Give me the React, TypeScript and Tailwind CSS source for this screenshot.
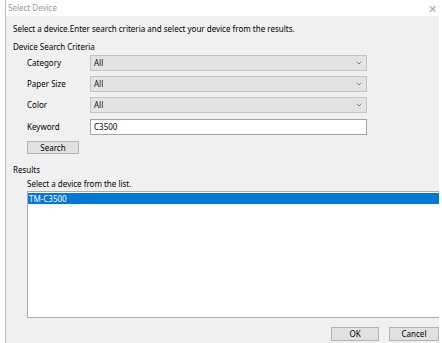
import { ChevronDown } from "lucide-react";

const rows = [
  { label: "Category", value: "All" },
  { label: "Paper Size", value: "All" },
  { label: "Color", value: "All" },
];

function SelectBox({ value }: { value: string }) {
  return (
    <div className="flex h-[16px] w-[277px] items-center justify-between border border-[#c4c4c4] bg-[#e3e3e3] pl-[3px] pr-[3px]">
      <span className="text-[#111]">{value}</span>
      <ChevronDown className="h-[8px] w-[8px] text-[#707070]" strokeWidth={2.5} />
    </div>
  );
}

export default function App() {
  return (
    <div className="relative h-[343px] w-[442px] overflow-hidden bg-white text-[8px] text-black [font-family:'Noto_Sans',Arial,sans-serif]">
      <div className="ml-[5px] flex h-full w-[434px] flex-col overflow-hidden border-l border-[#b5bcc6]">
        {/* title bar */}
        <div className="flex h-[16px] shrink-0 items-center justify-between bg-white pl-[2px] pr-[2px]">
          <span className="text-[#9a9a9a]">Select Device</span>
          <span className="text-[11px] font-extralight leading-none text-[#a8a8a8]">✕</span>
        </div>

        <div className="flex flex-1 flex-col bg-[#f0f0f0] pt-[6px]">
          <div className="h-[14px] pl-[7px] leading-[14px]">
            Select a device.Enter search criteria and select your device from the results.
          </div>
          <div className="mt-[4px] h-[14px] pl-[7px] leading-[14px]">Device Search Criteria</div>

          <div className="mt-[1px] flex flex-col gap-[5px] pl-[21px]">
            {rows.map((r) => (
              <div key={r.label} className="flex h-[16px] items-center">
                <span className="w-[63px]">{r.label}</span>
                <SelectBox value={r.value} />
              </div>
            ))}
            <div className="mt-[1px] flex h-[16px] items-center">
              <span className="w-[63px]">Keyword</span>
              <div className="flex h-[16px] w-[277px] items-center border border-[#a3a3a3] bg-white pl-[3px]">C3500</div>
            </div>
            <button className="mt-[1px] flex h-[13px] w-[52px] items-center justify-center border border-[#b4b4b4] bg-[#e1e1e1]">
              Search
            </button>
          </div>

          <div className="mt-[9px] h-[14px] pl-[7px] leading-[14px]">Results</div>
          <div className="h-[14px] pl-[21px] leading-[14px]">Select a device from the list.</div>

          <div className="ml-[21px] h-[127px] w-[420px] border border-[#acacac] bg-white pt-[1px]">
            <div className="flex h-[11px] items-center bg-[#0078d7] pl-[1px] text-white">TM-C3500</div>
          </div>

          <div className="mt-[9px] flex justify-end gap-[10px]">
            <button className="flex h-[14px] w-[48px] items-center justify-center border border-[#b4b4b4] bg-[#e1e1e1]">
              OK
            </button>
            <button className="flex h-[14px] w-[50px] items-center justify-center border border-[#b4b4b4] bg-[#e1e1e1]">
              Cancel
            </button>
          </div>
        </div>
      </div>
    </div>
  );
}
